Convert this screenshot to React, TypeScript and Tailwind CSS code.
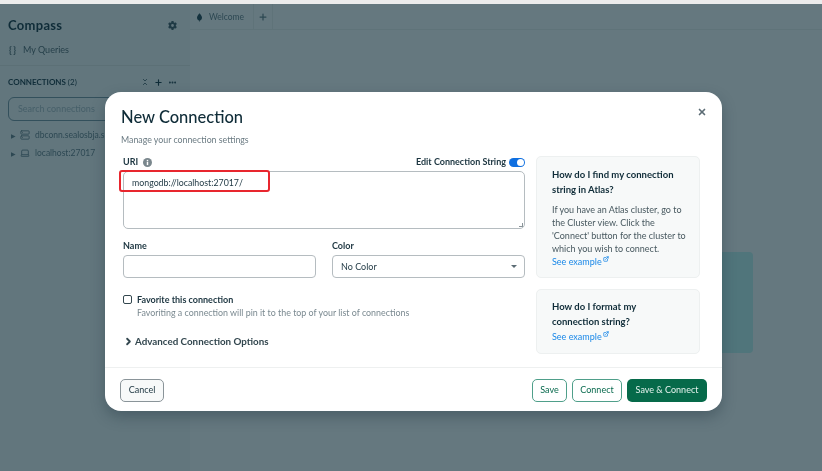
import React from "react";
import { Plus, Ellipsis, ChevronsDownUp, X, ChevronRight, ExternalLink, Server, Laptop } from "lucide-react";
import { FaGear } from "react-icons/fa6";

const font = "font-['Lato','Noto_Sans',sans-serif]";

function SeeExample({ className = "" }: { className?: string }) {
  return (
    <div className={`flex items-start text-[9px] leading-[13px] text-[#1a88e8] ${className}`}>
      <span>See example</span>
      <ExternalLink className="w-[6px] h-[6px] mt-[1px] ml-[1px]" strokeWidth={3} />
    </div>
  );
}

function InfoDot() {
  return (
    <svg viewBox="0 0 10 10" className="w-[9px] h-[9px]">
      <circle cx="5" cy="5" r="5" fill="#7a878d" />
      <rect x="4.2" y="4.3" width="1.6" height="3.6" fill="#fff" />
      <rect x="4.2" y="2.1" width="1.6" height="1.5" fill="#fff" />
    </svg>
  );
}

function Leaf() {
  return (
    <svg viewBox="0 0 8 14" className="w-[5px] h-[9px]">
      <path d="M4 0C6.5 3 8 5 8 7.5C8 10 6 11.5 4.4 12L4.2 14H3.8L3.6 12C2 11.5 0 10 0 7.5C0 5 1.5 3 4 0Z" fill="#14323e" />
    </svg>
  );
}

export default function App() {
  return (
    <div className={`${font} relative w-[822px] h-[471px] overflow-hidden bg-[#65787f] flex flex-col blur-[0.3px]`}>
      <div className="h-[4px] bg-[#ececec] shrink-0" />
      <div className="flex flex-1 min-h-0">
        <aside className="w-[190px] shrink-0 bg-[#62767d] text-[#0f2c38]">
          <div className="h-[62px] border-b border-[#5c7076] pl-[8px] pr-[13px]">
            <div className="flex items-center justify-between pt-[13px]">
              <span className="text-[13px] leading-[16px] font-bold tracking-[0.3px]">Compass</span>
              <FaGear className="w-[9px] h-[9px] text-[#1f3a45]" />
            </div>
            <div className="flex items-center mt-[11px] text-[9px] leading-[12px] text-[#253f49]">
              <span className="font-bold text-[9px] w-[15px] pl-[1px] tracking-[1.5px]">{"{}"}</span>
              <span>My Queries</span>
            </div>
          </div>
          <div className="pl-[8px] pr-[13px] pt-[10px]">
            <div className="flex items-center justify-between">
              <span className="text-[8px] leading-[12px] font-bold">CONNECTIONS <span className="font-normal">(2)</span></span>
              <span className="flex items-center gap-[5px]">
                <ChevronsDownUp className="w-[8px] h-[8px]" strokeWidth={2} />
                <Plus className="w-[9px] h-[9px]" strokeWidth={3} />
                <Ellipsis className="w-[9px] h-[9px]" strokeWidth={3} />
              </span>
            </div>
            <div className="mt-[9px] h-[24px] rounded-[6px] border border-[#33505c] pl-[9px] flex items-center text-[9px] text-[#465f69]">Search connections</div>
            <div className="mt-[5px] flex items-center h-[18px] text-[8.5px] text-[#2d4853]">
              <span className="text-[6px] mr-[4px] ml-[3px]">▶</span>
              <Server className="w-[10px] h-[10px] mr-[5px]" strokeWidth={2} />
              <span>dbconn.sealosbja.site</span>
            </div>
            <div className="flex items-center h-[18px] text-[8.5px] text-[#2d4853]">
              <span className="text-[6px] mr-[4px] ml-[3px]">▶</span>
              <Laptop className="w-[10px] h-[10px] mr-[5px]" strokeWidth={2} />
              <span>localhost:27017</span>
            </div>
          </div>
        </aside>
        <main className="flex-1 min-w-0 relative">
          <div className="flex h-[26px] border-b border-[#5f7379]">
            <div className="w-[63px] pl-[7px] pt-[1px] flex items-center gap-[7px] text-[8.5px] text-[#2d4853]">
              <Leaf />
              <span>Welcome</span>
            </div>
            <div className="w-[20px] border-x border-[#5f7379] flex items-center justify-center text-[#2d4853]">
              <Plus className="w-[10px] h-[10px]" strokeWidth={3} />
            </div>
          </div>
          <div className="absolute left-[400px] top-[248px] w-[163px] h-[101px] rounded-[4px] bg-[#50757b]" />
        </main>
      </div>

      <div className="absolute left-[105px] top-[92px] w-[617px] h-[319px] bg-white rounded-[16px] shadow-[0_6px_14px_rgba(30,50,60,0.35)] flex flex-col">
        <button className="absolute right-[15px] top-[15px] text-[#5c6c75]"><X className="w-[10px] h-[10px]" strokeWidth={4} /></button>
        <div className="flex-1 min-h-0 pl-[16px] pr-[22px] pt-[14px]">
          <h1 className="text-[16.5px] leading-[22px] font-medium text-[#0f2c38]">New Connection</h1>
          <p className="mt-[5px] text-[8.8px] leading-[13px] text-[#6b7b83]">Manage your connection settings</p>
          <div className="flex gap-[11px] mt-[8px] pl-[2px]">
            <div className="w-[402px] shrink-0 relative">
              <div className="flex items-center justify-between h-[16px]">
                <span className="flex items-center gap-[5px] text-[9px] font-bold text-[#1c3540]">URI <InfoDot /></span>
                <span className="flex items-center gap-[3px] text-[9px] font-bold text-[#1c3540]">
                  Edit Connection String
                  <span className="w-[16px] h-[9px] rounded-full bg-[#0f6fe0] relative">
                    <span className="absolute right-[1px] top-[1px] w-[7px] h-[7px] rounded-full bg-white" />
                  </span>
                </span>
              </div>
              <div className="mt-[1px] h-[58px] border border-[#b5bcc0] rounded-[5px] pl-[8px] pt-[4px] text-[8.8px] leading-[13px] text-[#1c3540] relative">
                mongodb://localhost:27017/
                <span className="absolute right-[1px] bottom-[1px] w-[4px] h-[4px] border-r border-b border-[#8a9499]" />
              </div>
              <div className="absolute -left-[4px] top-[16px] w-[151px] h-[22px] border-[2.5px] border-[#e8262e] rounded-[3px]" />
              <div className="flex gap-[16px] mt-[10px]">
                <div className="flex-1">
                  <div className="text-[9px] leading-[13px] font-bold text-[#1c3540]">Name</div>
                  <div className="mt-[3px] h-[23px] border border-[#b5bcc0] rounded-[4px]" />
                </div>
                <div className="flex-1">
                  <div className="text-[9px] leading-[13px] font-bold text-[#1c3540]">Color</div>
                  <div className="mt-[3px] h-[23px] border border-[#b5bcc0] rounded-[4px] flex items-center justify-between pl-[8px] pr-[7px] text-[9px] text-[#1c3540]">
                    <span>No Color</span>
                    <span className="w-0 h-0 border-x-[3px] border-x-transparent border-t-[3px] border-t-[#5c6c75]" />
                  </div>
                </div>
              </div>
              <div className="flex items-center gap-[5px] mt-[15px]">
                <span className="w-[9px] h-[9px] border-[1.5px] border-[#33474f] rounded-[2px]" />
                <span className="text-[9px] leading-[13px] font-bold text-[#1c3540]">Favorite this connection</span>
              </div>
              <div className="pl-[14px] text-[8.9px] leading-[13px] text-[#7a8990]">Favoriting a connection will pin it to the top of your list of connections</div>
              <div className="flex items-center gap-[1px] mt-[15px] text-[9.8px] leading-[14px] font-bold text-[#33474f]">
                <ChevronRight className="w-[11px] h-[11px]" strokeWidth={4} />
                Advanced Connection Options
              </div>
            </div>
            <div className="w-[164px] shrink-0 flex flex-col gap-[11px] mt-[2px]">
              <div className="h-[122px] bg-[#f7f9f9] border border-[#edf0f0] rounded-[5px] pl-[15px] pr-[12px] pt-[10px]">
                <div className="text-[9.5px] leading-[15px] font-bold text-[#0f2c38]">How do I find my connection string in Atlas?</div>
                <div className="mt-[6px] text-[9px] leading-[13px] text-[#47585f]">If you have an Atlas cluster, go to the Cluster view. Click the 'Connect' button for the cluster to which you wish to connect.</div>
                <SeeExample />
              </div>
              <div className="h-[65px] bg-[#f7f9f9] border border-[#edf0f0] rounded-[5px] pl-[15px] pr-[12px] pt-[9px]">
                <div className="text-[9.5px] leading-[15px] font-bold text-[#0f2c38] w-[100px]">How do I format my connection string?</div>
                <SeeExample className="mt-[1px]" />
              </div>
            </div>
          </div>
        </div>
        <div className="h-[44px] shrink-0 border-t border-[#eef0f0] flex items-center justify-between pl-[15px] pr-[15px] text-[9px] pt-[1px]">
          <button className="w-[44px] h-[23px] bg-[#f7f9f9] border border-[#8a9499] rounded-[5px] text-[#1c3540]">Cancel</button>
          <div className="flex gap-[5px]">
            <button className="w-[35px] h-[23px] border border-[#4f9f8a] rounded-[5px] text-[#0a6b4f]">Save</button>
            <button className="w-[50px] h-[23px] border border-[#4f9f8a] rounded-[5px] text-[#0a6b4f]">Connect</button>
            <button className="w-[80px] h-[23px] bg-[#066a4a] rounded-[5px] text-[#e6f3ee]">Save &amp; Connect</button>
          </div>
        </div>
      </div>
    </div>
  );
}
